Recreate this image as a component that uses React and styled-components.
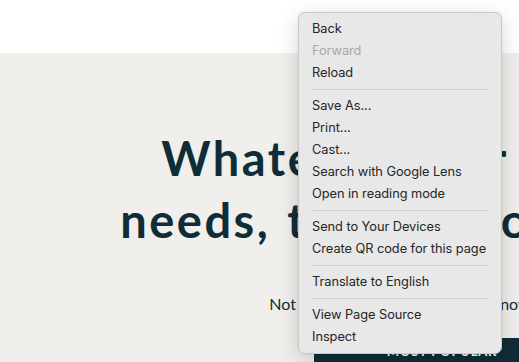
import React from "react";
import styled, { createGlobalStyle } from "styled-components";

const GlobalStyle = createGlobalStyle`
  html, body {
    margin: 0;
    padding: 0;
    width: 519px;
    height: 362px;
    overflow: hidden;
    background: #ffffff;
  }
`;

const Page = styled.div`
  position: relative;
  width: 519px;
  height: 362px;
  overflow: hidden;
`;

const Header = styled.header`
  height: 53px;
  background: #ffffff;
`;

const Hero = styled.section`
  height: 309px;
  background: #f0efeb;
`;

const HeroInner = styled.div`
  width: 670px;
  padding-top: 74px;
  display: flex;
  flex-direction: column;
  align-items: center;
  text-align: center;
  color: #0f2d38;
`;

const Heading = styled.h1`
  margin: 0;
  font-family: "Lato", "Noto Sans", sans-serif;
  font-weight: 700;
  font-size: 47px;
  line-height: 62px;
  letter-spacing: 2.5px;
  word-spacing: 3px;
`;

const Lead = styled.p`
  margin: 43px 0 0;
  font-family: "Lato", sans-serif;
  font-size: 16px;
  line-height: 20px;
  padding-left: 130px;
`;

const CtaButton = styled.button`
  margin-top: 24px;
  margin-left: 214px;
  width: 256px;
  height: 24px;
  padding: 0;
  border: none;
  background: #0f2d38;
  color: #ffffff;
  font-family: "Lato", sans-serif;
  font-weight: 700;
  font-size: 13px;
  line-height: 27px;
  letter-spacing: 0.8px;
`;

const Menu = styled.ul`
  position: absolute;
  left: 298px;
  top: 12px;
  width: 204px;
  box-sizing: border-box;
  margin: 0;
  padding: 5px 0;
  list-style: none;
  background: #e8e8e8;
  border: 1px solid #c9c9c9;
  border-radius: 7px;
  box-shadow: 0 6px 22px rgba(0, 0, 0, 0.16), 0 0 0 0.5px rgba(0, 0, 0, 0.05);
  font-family: "Inter", "Liberation Sans", sans-serif;
  font-size: 12.8px;
`;

const Item = styled.li`
  height: 22px;
  line-height: 22px;
  padding: 0 13px;
  color: ${(p) => (p.$disabled ? "#a9a9a9" : "#252525")};
  white-space: nowrap;
  letter-spacing: -0.05px;
`;

const Separator = styled.li`
  height: 11px;
  display: flex;
  align-items: center;
  padding: 0 13px 0 13px;

  &::after {
    content: "";
    flex: 1;
    height: 1px;
    background: #d1d1d1;
  }
`;

const groups = [
  [{ label: "Back" }, { label: "Forward", disabled: true }, { label: "Reload" }],
  [
    { label: "Save As..." },
    { label: "Print..." },
    { label: "Cast..." },
    { label: "Search with Google Lens" },
    { label: "Open in reading mode" },
  ],
  [{ label: "Send to Your Devices" }, { label: "Create QR code for this page" }],
  [{ label: "Translate to English" }],
  [{ label: "View Page Source" }, { label: "Inspect" }],
];

export default function App() {
  return (
    <Page>
      <GlobalStyle />
      <Header />
      <Hero>
        <HeroInner>
          <Heading>
            Whatever your
            <br />
            needs, they've got
          </Heading>
          <Lead>Not sure which plan fits? Let us know</Lead>
          <CtaButton>MOST POPULAR</CtaButton>
        </HeroInner>
      </Hero>

      <Menu>
        {groups.map((group, gi) => (
          <React.Fragment key={gi}>
            {gi > 0 && <Separator />}
            {group.map((item) => (
              <Item key={item.label} $disabled={item.disabled}>
                {item.label}
              </Item>
            ))}
          </React.Fragment>
        ))}
      </Menu>
    </Page>
  );
}
